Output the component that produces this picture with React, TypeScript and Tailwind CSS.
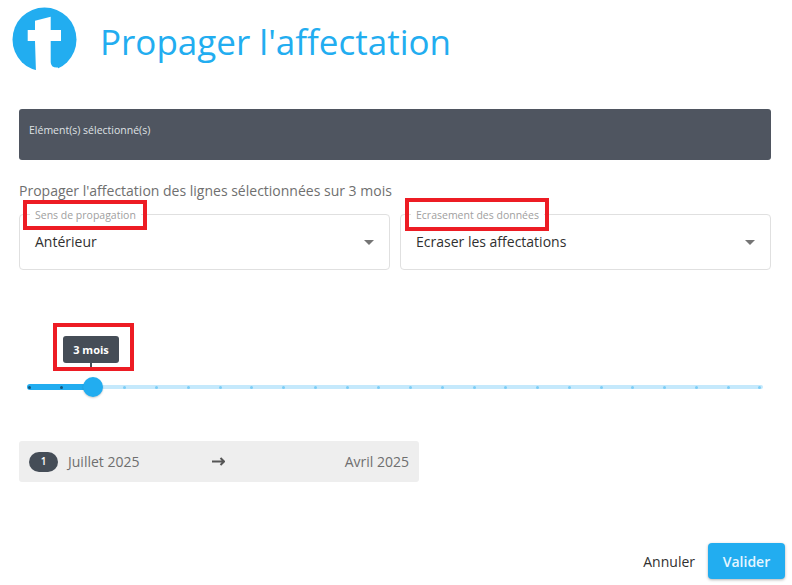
const ticks = Array.from({ length: 24 }, (_, i) => i);

function Logo() {
  return (
    <svg width="66" height="66" viewBox="0 0 66 66" className="shrink-0 mb-[4px]">
      <circle cx="32.5" cy="32.5" r="32" fill="#22ADF0" />
      <path
        d="M23 13.7 L38.7 9.7 L38.7 23 L49 23 L49 34 L38.7 34 L38.7 55 Q38.7 61 46 60.5 L46 66 L24 66 L23 34 L15.7 34 L15.7 23 L23 23 Z"
        fill="#fff"
      />
    </svg>
  );
}

function Select({ label, value }: { label: string; value: string }) {
  return (
    <div className="relative flex-1 h-[56px] rounded border border-[#e0e0e0] pl-[15px] pr-[15px] pt-[15px] flex items-start justify-between">
      <span className="absolute left-[10px] top-[-7px] bg-white px-[5px] text-[10.5px] leading-[14px] text-[#a0a0a0]">{label}</span>
      <span className="text-[14px] leading-[24px] text-[#303030]">{value}</span>
      <span className="mt-[10px] w-0 h-0 border-x-[5px] border-x-transparent border-t-[5px] border-t-[#757575]" />
    </div>
  );
}

export default function App() {
  return (
    <div className="relative w-[792px] h-[585px] overflow-hidden bg-white font-['Open_Sans',sans-serif]">
      <header className="flex items-center h-[84px] pl-[12px]">
        <Logo />
        <h1 className="ml-[22px] text-[35px] leading-[46px] text-[#22ADF0]">Propager l'affectation</h1>
      </header>

      <div className="ml-[19px] mr-[21px] mt-[25px] h-[51px] rounded-[3px] bg-[#4F5560] px-[10px] pt-[14px] text-[10.5px] leading-[14px] text-[#dfe1e4]">
        Elément(s) sélectionné(s)
      </div>

      <p className="ml-[19px] mr-[21px] mt-[21px] text-[14px] leading-[20px] text-[#6f6f6f]">
        Propager l'affectation des lignes sélectionnées sur 3 mois
      </p>

      <div className="ml-[19px] mr-[21px] mt-[13px] flex gap-[10px]">
        <Select label="Sens de propagation" value="Antérieur" />
        <Select label="Ecrasement des données" value="Ecraser les affectations" />
      </div>

      <div className="relative ml-[27px] mt-[112px] h-[14px] w-[736px]">
        <div className="absolute left-0 right-0 top-[3px] h-[4px] rounded-full bg-[#C5E9FC]" />
        <div className="absolute left-0 w-[66px] top-[2px] h-[6px] rounded-full bg-[#22ADF0]" />
        <div className="absolute left-[1px] right-[1.5px] top-[3px] flex h-[4px] items-center justify-between">
          {ticks.map((t) => (
            <span key={t} className={`h-[3px] w-[3px] rounded-full ${t < 2 ? "bg-[#14567c]" : "bg-[#7CCDF6]"}`} />
          ))}
        </div>
        <div className="absolute left-[56px] top-[-5px] h-[20px] w-[20px] rounded-full bg-[#22ADF0] shadow-[0_1px_2px_rgba(0,0,0,0.2)]" />
        <div className="absolute left-[36px] top-[-46px] flex h-[27px] w-[56px] items-center justify-center rounded-[3px] bg-[#454D57] pt-[1px] text-[11px] font-bold text-white">
          3 mois
        </div>
        <div className="absolute left-[63px] top-[-19px] h-[4px] w-[2px] bg-[#454D57]" />
      </div>

      <div className="ml-[19px] mt-[45px] flex h-[41px] w-[400px] items-center rounded-[3px] bg-[#EEEEEE] px-[10px] text-[14px] text-[#6f6f6f]">
        <span className="flex h-[20px] w-[29px] items-center justify-center rounded-full bg-[#454D57] text-[10px] font-semibold text-white">1</span>
        <span className="ml-[10px]">Juillet 2025</span>
        <svg width="13" height="9" viewBox="0 0 13 9" className="ml-[73px]">
          <path d="M0 4.5 H12 M8.5 1 L12.2 4.5 L8.5 8" fill="none" stroke="#555" strokeWidth="2" />
        </svg>
        <span className="ml-auto">Avril 2025</span>
      </div>

      <div className="absolute bottom-[6px] right-[7px] flex items-center gap-[13px]">
        <span className="text-[14px] text-[#303030]">Annuler</span>
        <button className="h-[36px] w-[77px] rounded-[4px] bg-[#22ADF0] text-[14px] font-semibold text-[#e6f6ff] shadow-[0_1px_3px_rgba(0,0,0,0.3)]">Valider</button>
      </div>

      <div className="absolute left-[23px] top-[200px] h-[30px] w-[124px] border-4 border-[#ED1C24]" />
      <div className="absolute left-[405px] top-[198px] h-[33px] w-[144px] border-4 border-[#ED1C24]" />
      <div className="absolute left-[53px] top-[323px] h-[48px] w-[81px] border-4 border-[#ED1C24]" />
    </div>
  );
}
